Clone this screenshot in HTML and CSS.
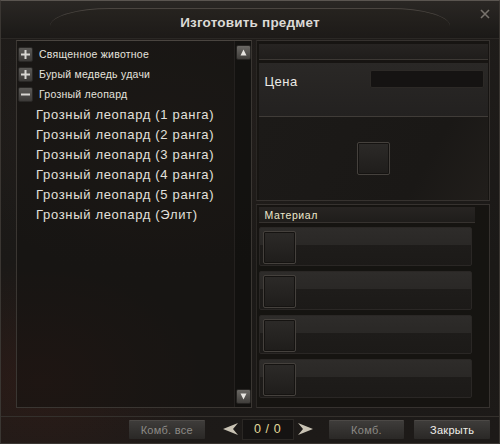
FILE: index.html
```html
<!DOCTYPE html>
<html lang="ru">
<head>
<meta charset="utf-8">
<title>Изготовить предмет</title>
<link rel="stylesheet" href="styles.css">
</head>
<body>
<div class="window">
  <div class="titlebar">
    <div class="title-plate"><span class="title">Изготовить предмет</span></div>
    <svg class="close" width="10" height="10" viewBox="0 0 10 10"><path d="M1 1 L9 9 M9 1 L1 9" stroke="#77726c" stroke-width="1.6"/></svg>
  </div>
  <div class="main">
    <div class="left">
      <ul class="tree">
        <li class="group"><span class="tog"><svg width="9" height="9" viewBox="0 0 9 9"><path d="M0 4.5H9M4.5 0V9" stroke="#d8d6d2" stroke-width="2"/></svg></span><span class="gname">Священное животное</span></li>
        <li class="group"><span class="tog"><svg width="9" height="9" viewBox="0 0 9 9"><path d="M0 4.5H9M4.5 0V9" stroke="#d8d6d2" stroke-width="2"/></svg></span><span class="gname">Бурый медведь удачи</span></li>
        <li class="group"><span class="tog"><svg width="9" height="9" viewBox="0 0 9 9"><path d="M0 4.5H9" stroke="#d8d6d2" stroke-width="2"/></svg></span><span class="gname">Грозный леопард</span></li>
        <li class="item">Грозный леопард (1 ранга)</li>
        <li class="item">Грозный леопард (2 ранга)</li>
        <li class="item">Грозный леопард (3 ранга)</li>
        <li class="item">Грозный леопард (4 ранга)</li>
        <li class="item">Грозный леопард (5 ранга)</li>
        <li class="item">Грозный леопард (Элит)</li>
      </ul>
      <div class="scroll">
        <span class="sbtn"><svg width="7" height="7" viewBox="0 0 7 7"><path d="M3.5 0.5 L6.5 6.5 L0.5 6.5Z" fill="#e6e4e0"/></svg></span>
        <span class="sbtn"><svg width="7" height="7" viewBox="0 0 7 7"><path d="M0.5 0.5 L6.5 0.5 L3.5 6.5Z" fill="#e6e4e0"/></svg></span>
      </div>
    </div>
    <div class="right">
      <div class="product">
        <div class="pbar"></div>
        <div class="price">
          <span class="plabel">Цена</span>
          <span class="pfield"></span>
        </div>
        <div class="preview"><span class="slot"></span></div>
      </div>
      <div class="materials">
        <div class="mhead">Материал</div>
        <div class="mrow"><span class="slot"></span></div>
        <div class="mrow"><span class="slot"></span></div>
        <div class="mrow"><span class="slot"></span></div>
        <div class="mrow"><span class="slot"></span></div>
      </div>
    </div>
  </div>
  <div class="footer">
    <button class="btn dim">Комб. все</button>
    <div class="pager">
      <svg class="arrow" width="15" height="12" viewBox="0 0 15 12"><path d="M0 6 L15 0 L10 6 L15 12Z" fill="#c9c3b4"/></svg>
      <span class="count">0 / 0</span>
      <svg class="arrow" width="15" height="12" viewBox="0 0 15 12"><path d="M15 6 L0 0 L5 6 L0 12Z" fill="#c9c3b4"/></svg>
    </div>
    <button class="btn dim">Комб.</button>
    <button class="btn">Закрыть</button>
  </div>
</div>
</body>
</html>
```

FILE: styles.css
```css
* { box-sizing: border-box; }
html, body { margin: 0; padding: 0; background: #141210; }
body { font-family: "Liberation Sans", Arial, sans-serif; color: #e6e4e0; }

.window {
  width: 500px; height: 444px;
  background:
    radial-gradient(ellipse 160px 120px at 40px 380px, rgba(70,30,22,0.35), transparent),
    radial-gradient(ellipse 200px 140px at 160px 140px, rgba(50,40,34,0.35), transparent),
    linear-gradient(#1f1c1a, #1b1917 60%, #1d1a18);
  border: 1px solid #3a3632;
  border-top-color: #5a5550;
  display: flex; flex-direction: column;
  position: relative;
  overflow: hidden;
}

.titlebar {
  height: 38px;
  display: flex; justify-content: center; align-items: flex-end;
  background: linear-gradient(#2a2724, #1b1917);
  border-bottom: 1px solid #2b2825;
}
.title-plate {
  width: 400px; height: 30px;
  border-radius: 60px 60px 0 0 / 18px 18px 0 0;
  background: linear-gradient(#26231f, #1d1a18);
  border-top: 1px solid #4a4540;
  display: flex; justify-content: center; align-items: center;
  padding-bottom: 2px;
}
.title { font-weight: bold; font-size: 13.5px; color: #dcdad6; letter-spacing: 0.2px; }
.close { position: absolute; right: 9px; top: 8px; }

.main {
  display: flex; gap: 4px;
  margin: 1px 9px 0 15px;
  height: 368px;
}

.left {
  width: 236px;
  display: flex;
  border: 1px solid #3a3632;
  border-top-color: #4a4540;
  background: rgba(20,18,16,0.55);
}
.tree { list-style: none; margin: 0; padding: 3px 0 0 0; flex: 1; }
.tree li { height: 20px; display: flex; align-items: center; white-space: nowrap; }
.group { padding-left: 1px; }
.tog {
  width: 15px; height: 15px;
  display: flex; align-items: center; justify-content: center;
  background: linear-gradient(#5b5956, #3c3a38);
  border: 1px solid #2a2826;
  border-radius: 2px;
  margin-right: 6px;
}
.gname { font-size: 10.5px; letter-spacing: 0.25px; color: #e4e2de; }
.item { font-size: 13px; padding-left: 19px; letter-spacing: 0.68px; color: #e2e0dc; }

.scroll {
  width: 17px;
  display: flex; flex-direction: column; justify-content: space-between;
  padding: 4px 0 3px 1px;
  border-left: 1px solid #24211f;
  background: rgba(14,13,12,0.5);
}
.sbtn {
  width: 15px; height: 15px;
  display: flex; align-items: center; justify-content: center;
  background: linear-gradient(#6a6864, #403e3b);
  border: 1px solid #262422;
  border-radius: 2px;
}

.right { width: 235px; display: flex; flex-direction: column; gap: 3px; }
.product {
  height: 161px;
  border: 1px solid #36322f;
  border-left: 1px solid #2a2724;
  background: rgba(18,16,14,0.6);
  padding: 3px 1px 0 2px;
  display: flex; flex-direction: column;
}
.pbar { height: 16px; background: linear-gradient(#272422, #1f1d1b); border-bottom: 1px solid #3c3834; }
.price {
  margin-top: 3px;
  height: 54px;
  background: linear-gradient(#2a2826, #232120);
  border-bottom: 1px solid #403c38;
  display: flex; align-items: flex-start; justify-content: space-between;
  padding: 7px 4px 0 6px;
}
.plabel { font-size: 13px; color: #eceae6; margin-top: 4px; letter-spacing: 0.5px; }
.pfield { width: 114px; height: 18px; background: #151312; border: 1px solid #2c2926; border-radius: 2px; }
.preview {
  flex: 1;
  display: flex; justify-content: center; align-items: flex-start;
  padding-top: 25px;
  background: linear-gradient(120deg, #1c1a18, #1a1816 70%, #211e1b);
}
.slot {
  display: block;
  width: 33px; height: 33px;
  border: 1px solid #45413d;
  border-radius: 2px;
  background: linear-gradient(#2c2a28, #1f1d1b);
  box-shadow: inset 0 0 0 1px #151311;
}

.materials {
  flex: 1;
  border: 1px solid #36322f;
  border-left: 1px solid #2a2724;
  background: rgba(18,16,14,0.6);
  padding: 2px 17px 0 2px;
  display: flex; flex-direction: column; gap: 5px;
}
.mhead {
  height: 16px;
  background: linear-gradient(#272422, #1f1d1b);
  border-bottom: 1px solid #36322f;
  font-size: 10.5px; letter-spacing: 0.6px; color: #ece8cc;
  padding: 2px 0 0 6px;
  margin-bottom: -1px;
  margin-right: -3px;
}
.mrow {
  height: 39px;
  border-radius: 2px;
  background: linear-gradient(#2e2c2a 0, #2a2826 45%, #1e1c1a 46%, #1c1a18);
  border: 1px solid #2a2725;
  padding: 3px 0 0 3px;
}

.footer {
  flex: 1;
  margin-top: 8px;
  border-top: 1px solid #34302c;
  display: flex; align-items: center;
  padding: 0 9px 2px 128px;
}
.btn {
  width: 76px; height: 19px;
  font-family: "Liberation Sans", Arial, sans-serif;
  font-size: 11px; letter-spacing: 0.3px;
  color: #f0eeea;
  background: linear-gradient(#3e3c3a, #2a2826);
  border: none;
  border-top: 1px solid #4c4946;
  border-radius: 1px;
  padding: 0;
}
.btn.dim { color: #8c8a86; }
.pager { display: flex; align-items: center; gap: 4px; margin: 0 16px 0 18px; }
.count {
  width: 52px; height: 21px;
  background: #151312;
  border: 1px solid #2a2724;
  display: flex; align-items: center; justify-content: center;
  font-size: 12.5px; color: #e2da9a; letter-spacing: 0.6px;
}
.footer .btn:last-child { margin-left: 10px; }
```
